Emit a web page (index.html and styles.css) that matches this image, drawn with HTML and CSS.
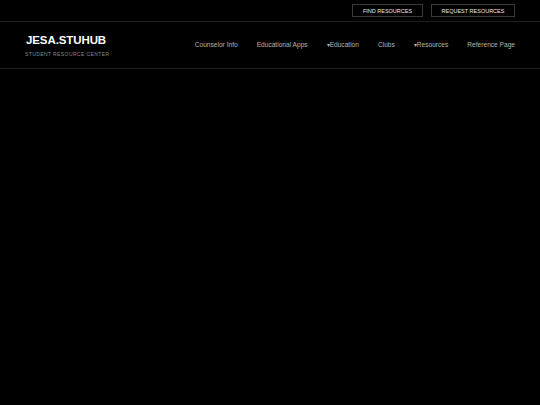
FILE: index.html
```html
<!DOCTYPE html>
<html lang="en">
<head>
<meta charset="utf-8">
<title>JESA.STUHUB</title>
<link rel="stylesheet" href="styles.css">
</head>
<body>
<div class="topbar">
  <a class="topbtn" href="#">FIND RESOURCES</a>
  <a class="topbtn" href="#">REQUEST RESOURCES</a>
</div>
<header class="header">
  <div class="brand">
    <div class="logo">JESA.STUHUB</div>
    <div class="tagline">STUDENT RESOURCE CENTER</div>
  </div>
  <nav class="nav">
    <a href="#">Counselor Info</a>
    <a href="#">Educational Apps</a>
    <a href="#"><span class="caret">▾</span>Education</a>
    <a href="#">Clubs</a>
    <a href="#"><span class="caret">▾</span>Resources</a>
    <a href="#">Reference Page</a>
  </nav>
</header>
<main class="main"></main>
</body>
</html>
```

FILE: styles.css
```css
html, body {
  margin: 0;
  padding: 0;
  background: #000;
  height: 100%;
}
body {
  font-family: "Liberation Sans", Arial, sans-serif;
  color: #fff;
  -webkit-font-smoothing: antialiased;
}
a { text-decoration: none; color: inherit; }
.topbar {
  display: flex;
  justify-content: flex-end;
  align-items: center;
  gap: 8px;
  padding: 0 25px;
  border-bottom: 1px solid #1c1c1c;
  box-sizing: border-box;
  height: 22px;
}
.topbtn {
  display: flex;
  align-items: center;
  justify-content: center;
  height: 13px;
  border: 1px solid #3a3a3a;
  font-size: 5.5px;
  color: #e8e8e8;
  white-space: nowrap;
  box-sizing: border-box;
}
.topbtn:first-child { width: 71px; }
.topbtn:last-child { width: 84px; }
.header {
  height: 47px;
  box-sizing: border-box;
  border-bottom: 1px solid #1c1c1c;
  display: flex;
  justify-content: space-between;
  align-items: center;
  padding: 0 25px;
}
.brand { display: flex; flex-direction: column; gap: 6px; margin-top: 2px; }
.logo {
  font-size: 11.5px;
  font-weight: 700;
  letter-spacing: -0.1px;
  line-height: 1;
  color: #fff;
  padding-left: 1px;
}
.tagline {
  font-size: 5px;
  letter-spacing: 0.4px;
  color: #8a8a8a;
  line-height: 1;
}
.nav {
  display: flex;
  gap: 19px;
  font-size: 6.6px;
  color: #b4b4b4;
  margin-bottom: 2px;
}
.caret { font-size: 5.5px; }
```
